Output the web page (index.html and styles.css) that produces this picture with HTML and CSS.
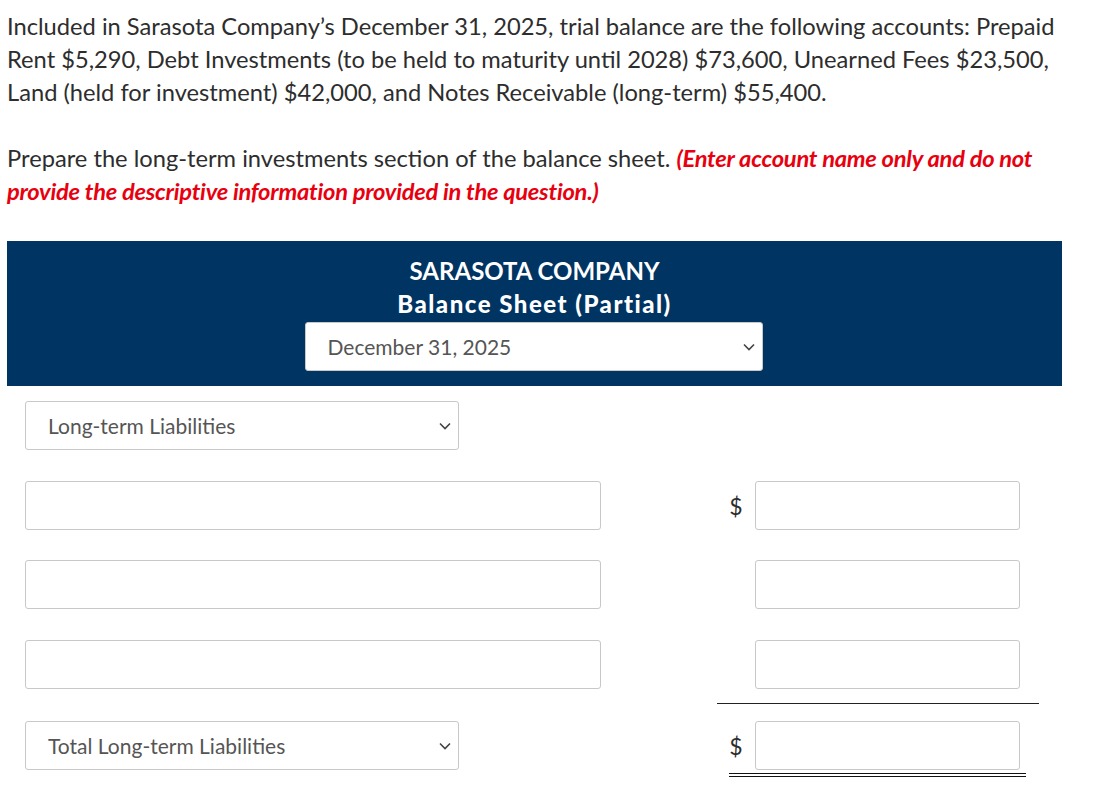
FILE: index.html
```html
<!DOCTYPE html>
<html>
<head>
<meta charset="utf-8">
<link rel="stylesheet" href="styles.css">
</head>
<body>
<div class="page">
  <p class="intro">Included in Sarasota Company’s December 31, 2025, trial balance are the following accounts: Prepaid Rent $5,290, Debt Investments (to be held to maturity until 2028) $73,600, Unearned Fees $23,500, Land (held for investment) $42,000, and Notes Receivable (long-term) $55,400.</p>
  <p class="intro instr">Prepare the long-term investments section of the balance sheet. <em class="note">(Enter account name only and do not provide the descriptive information provided in the question.)</em></p>

  <div class="sheet">
    <div class="sheet-head">
      <div class="title t1">SARASOTA COMPANY</div>
      <div class="title t2">Balance Sheet (Partial)</div>
      <div class="select date-select"><span>December 31, 2025</span><svg class="chev" width="12" height="8" viewBox="0 0 12 8"><path d="M1 1.5 L6 6.5 L11 1.5" fill="none" stroke="#444" stroke-width="1.6"/></svg></div>
    </div>

    <div class="rows">
      <div class="row">
        <div class="select heading-select"><span>Long-term Liabilities</span><svg class="chev" width="12" height="8" viewBox="0 0 12 8"><path d="M1 1.5 L6 6.5 L11 1.5" fill="none" stroke="#444" stroke-width="1.6"/></svg></div>
      </div>
      <div class="row">
        <div class="input name-input"></div>
        <div class="amount"><span class="dollar">$</span><div class="input amt-input"></div></div>
      </div>
      <div class="row">
        <div class="input name-input"></div>
        <div class="amount"><span class="dollar"></span><div class="input amt-input"></div></div>
      </div>
      <div class="row last-row">
        <div class="input name-input"></div>
        <div class="amount underline"><span class="dollar"></span><div class="input amt-input"></div></div>
      </div>
      <div class="row total-row">
        <div class="select heading-select"><span>Total Long-term Liabilities</span><svg class="chev" width="12" height="8" viewBox="0 0 12 8"><path d="M1 1.5 L6 6.5 L11 1.5" fill="none" stroke="#444" stroke-width="1.6"/></svg></div>
        <div class="amount total-amount"><span class="dollar">$</span><div class="input amt-input"></div></div>
      </div>
      <div class="double-line"></div>
    </div>
  </div>
</div>
</body>
</html>
```

FILE: styles.css
```css
* { box-sizing: border-box; }
html, body { margin: 0; padding: 0; background: #fff; }
body {
  font-family: Lato, "Open Sans", sans-serif;
  color: #2d2d2d;
}
.page {
  padding: 10px 0 0 7px;
  width: 1080px;
}
.intro {
  margin: 0 0 33px 0;
  font-size: 23.7px;
  line-height: 33px;
}
.note {
  color: #e8000f;
  font-weight: 700;
  font-style: italic;
  letter-spacing: -0.25px;
}
.sheet { width: 1055px; }
.sheet-head {
  background: #003462;
  color: #fff;
  display: flex;
  flex-direction: column;
  align-items: center;
  padding: 13px 0 15px 0;
}
.title {
  font-size: 24px;
  font-weight: 700;
  line-height: 33px;
}
.t2 { letter-spacing: 1.5px; font-weight: 900; }
.select {
  display: flex;
  align-items: center;
  justify-content: space-between;
  background: #fff;
  border: 1px solid #c8c8c8;
  border-radius: 3px;
  color: #555;
  font-size: 21px;
  height: 49px;
  padding: 0 7px 0 22px;
}
.date-select {
  width: 458px;
  height: 49px;
  margin-top: 2px;
  margin-left: -2px;
}
.chev { flex: none; }
.rows {
  padding: 15px 0 0 18px;
  display: flex;
  flex-direction: column;
}
.row {
  display: flex;
  align-items: flex-start;
  height: 49px;
  margin-bottom: 31px;
}
.row:nth-child(2) { margin-bottom: 30px; }
.heading-select { width: 434px; }
.input {
  border: 1px solid #c8c8c8;
  border-radius: 3px;
  background: #fff;
  height: 49px;
}
.name-input { width: 576px; }
.amount {
  display: flex;
  align-items: center;
  margin-left: 116px;
  width: 322px;
}
.dollar {
  width: 38px;
  text-align: center;
  font-size: 23px;
  color: #2d2d2d;
}
.amt-input { width: 265px; }
.underline {
  border-bottom: 1px solid #222;
  padding-bottom: 14px;
  height: 64px;
}
.last-row { margin-bottom: 32px; }
.total-row { margin-bottom: 0; }
.total-amount { margin-left: 258px; }
.double-line {
  margin: 3px 0 0 704px;
  width: 297px;
  height: 4px;
  border-top: 1px solid #111;
  border-bottom: 1px solid #111;
}
```
